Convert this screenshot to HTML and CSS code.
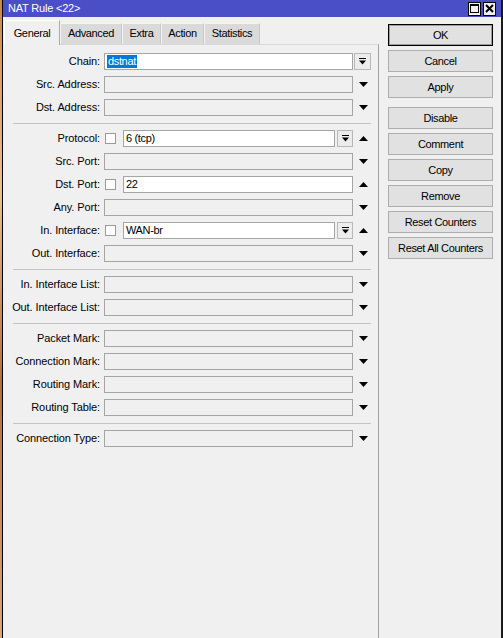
FILE: index.html
```html
<!DOCTYPE html>
<html>
<head>
<meta charset="utf-8">
<link rel="stylesheet" href="styles.css">
</head>
<body>
<div class="strip"></div>
<div class="window">
  <div class="titlebar">
    <span class="title">NAT Rule &lt;22&gt;</span>
    <div class="tb-btns">
      <span class="tb-btn"><svg width="9" height="9" viewBox="0 0 9 9"><rect x="0" y="0" width="9" height="2" fill="#000"/><rect x="0.5" y="0.5" width="8" height="8" fill="none" stroke="#000"/></svg></span>
      <span class="tb-btn"><svg width="9" height="9" viewBox="0 0 9 9"><path d="M1 1L8 8M8 1L1 8" stroke="#000" stroke-width="2"/></svg></span>
    </div>
  </div>
  <div class="body">
    <div class="main">
      <div class="tabs">
        <div class="tab active">General</div>
        <div class="tab t-adv">Advanced</div>
        <div class="tab t-extra">Extra</div>
        <div class="tab t-action">Action</div>
        <div class="tab t-stat">Statistics</div>
      </div>
      <div class="panel">
        <div class="row">
          <div class="label">Chain:</div>
          <div class="field"><div class="box white"><span class="sel">dstnat</span></div></div>
          <div class="trail"><span class="combo first"><svg width="7" height="7" viewBox="0 0 7 7"><rect x="0" y="0" width="7" height="1"/><path d="M0 2.5h7L3.5 6.5z"/></svg></span></div>
        </div>
        <div class="row">
          <div class="label">Src. Address:</div>
          <div class="field"><div class="box"></div></div>
          <div class="trail"><svg class="arr" width="9" height="5" viewBox="0 0 9 5"><path d="M0 0h9L4.5 5z"/></svg></div>
        </div>
        <div class="row">
          <div class="label">Dst. Address:</div>
          <div class="field"><div class="box"></div></div>
          <div class="trail"><svg class="arr" width="9" height="5" viewBox="0 0 9 5"><path d="M0 0h9L4.5 5z"/></svg></div>
        </div>
        <div class="sep"></div>
        <div class="row">
          <div class="label">Protocol:</div>
          <div class="field"><span class="check"></span><div class="box white">6 (tcp)</div><span class="combo"><svg width="7" height="7" viewBox="0 0 7 7"><rect x="0" y="0" width="7" height="1"/><path d="M0 2.5h7L3.5 6.5z"/></svg></span></div>
          <div class="trail"><svg class="arr" width="9" height="5" viewBox="0 0 9 5"><path d="M0 5h9L4.5 0z"/></svg></div>
        </div>
        <div class="row">
          <div class="label">Src. Port:</div>
          <div class="field"><div class="box"></div></div>
          <div class="trail"><svg class="arr" width="9" height="5" viewBox="0 0 9 5"><path d="M0 0h9L4.5 5z"/></svg></div>
        </div>
        <div class="row">
          <div class="label">Dst. Port:</div>
          <div class="field"><span class="check"></span><div class="box white">22</div></div>
          <div class="trail"><svg class="arr" width="9" height="5" viewBox="0 0 9 5"><path d="M0 5h9L4.5 0z"/></svg></div>
        </div>
        <div class="row">
          <div class="label">Any. Port:</div>
          <div class="field"><div class="box"></div></div>
          <div class="trail"><svg class="arr" width="9" height="5" viewBox="0 0 9 5"><path d="M0 0h9L4.5 5z"/></svg></div>
        </div>
        <div class="row">
          <div class="label">In. Interface:</div>
          <div class="field"><span class="check"></span><div class="box white">WAN-br</div><span class="combo"><svg width="7" height="7" viewBox="0 0 7 7"><rect x="0" y="0" width="7" height="1"/><path d="M0 2.5h7L3.5 6.5z"/></svg></span></div>
          <div class="trail"><svg class="arr" width="9" height="5" viewBox="0 0 9 5"><path d="M0 5h9L4.5 0z"/></svg></div>
        </div>
        <div class="row">
          <div class="label">Out. Interface:</div>
          <div class="field"><div class="box"></div></div>
          <div class="trail"><svg class="arr" width="9" height="5" viewBox="0 0 9 5"><path d="M0 0h9L4.5 5z"/></svg></div>
        </div>
        <div class="sep"></div>
        <div class="row">
          <div class="label">In. Interface List:</div>
          <div class="field"><div class="box"></div></div>
          <div class="trail"><svg class="arr" width="9" height="5" viewBox="0 0 9 5"><path d="M0 0h9L4.5 5z"/></svg></div>
        </div>
        <div class="row">
          <div class="label">Out. Interface List:</div>
          <div class="field"><div class="box"></div></div>
          <div class="trail"><svg class="arr" width="9" height="5" viewBox="0 0 9 5"><path d="M0 0h9L4.5 5z"/></svg></div>
        </div>
        <div class="sep"></div>
        <div class="row">
          <div class="label">Packet Mark:</div>
          <div class="field"><div class="box"></div></div>
          <div class="trail"><svg class="arr" width="9" height="5" viewBox="0 0 9 5"><path d="M0 0h9L4.5 5z"/></svg></div>
        </div>
        <div class="row">
          <div class="label">Connection Mark:</div>
          <div class="field"><div class="box"></div></div>
          <div class="trail"><svg class="arr" width="9" height="5" viewBox="0 0 9 5"><path d="M0 0h9L4.5 5z"/></svg></div>
        </div>
        <div class="row">
          <div class="label">Routing Mark:</div>
          <div class="field"><div class="box"></div></div>
          <div class="trail"><svg class="arr" width="9" height="5" viewBox="0 0 9 5"><path d="M0 0h9L4.5 5z"/></svg></div>
        </div>
        <div class="row">
          <div class="label">Routing Table:</div>
          <div class="field"><div class="box"></div></div>
          <div class="trail"><svg class="arr" width="9" height="5" viewBox="0 0 9 5"><path d="M0 0h9L4.5 5z"/></svg></div>
        </div>
        <div class="sep"></div>
        <div class="row">
          <div class="label">Connection Type:</div>
          <div class="field"><div class="box"></div></div>
          <div class="trail"><svg class="arr" width="9" height="5" viewBox="0 0 9 5"><path d="M0 0h9L4.5 5z"/></svg></div>
        </div>
      </div>
    </div>
    <div class="side">
      <div class="btn default">OK</div>
      <div class="btn">Cancel</div>
      <div class="btn">Apply</div>
      <div class="btn gap">Disable</div>
      <div class="btn">Comment</div>
      <div class="btn">Copy</div>
      <div class="btn">Remove</div>
      <div class="btn">Reset Counters</div>
      <div class="btn">Reset All Counters</div>
    </div>
  </div>
</div>
</body>
</html>
```
FILE: styles.css
```css
* { box-sizing: border-box; }
html, body { margin: 0; padding: 0; }
body {
  display: flex;
  width: 503px;
  height: 638px;
  overflow: hidden;
  background: #f0f0f0;
  font-family: "Liberation Sans", Arial, sans-serif;
  font-size: 11px;
  letter-spacing: -0.35px;
  color: #000;
}
.strip {
  width: 2px;
  height: 638px;
  background: linear-gradient(#c98a4a, #e8c090 30%, #b07040 60%, #d8a878);
  flex: none;
}
.window {
  width: 501px;
  height: 638px;
  border-left: 1px solid #000;
  border-right: 2px solid #1a1a1a;
  background: #f0f0f0;
  display: flex;
  flex-direction: column;
  flex: none;
}
.titlebar {
  height: 17px;
  background: #4a4fc8;
  display: flex;
  align-items: center;
  justify-content: space-between;
  padding: 0 5px 0 5px;
}
.title {
  color: #fff;
  font-size: 11px;
  letter-spacing: -0.2px;
  line-height: 17px;
}
.tb-btns { display: flex; gap: 2px; align-items: center; }
.tb-btn {
  width: 13px;
  height: 14px;
  background: #f0f0f0;
  border: 1px solid #000;
  display: flex;
  align-items: center;
  justify-content: center;
}
.body { display: flex; flex: 1; }
.main {
  width: 376px;
  display: flex;
  flex-direction: column;
}
.tabs {
  height: 27px;
  display: flex;
  align-items: flex-end;
  padding-left: 1px;
  position: relative;
  z-index: 1;
}
.tab {
  height: 21px;
  background: #dadada;
  border-top: 1px solid #f4f4f4;
  border-left: 1px solid #f4f4f4;
  border-right: 1px solid #c8c8c8;
  text-align: center;
  line-height: 13px;
  padding-top: 3px;
}
.tab.active {
  height: 25px;
  margin-bottom: -1px;
  background: #f0f0f0;
  width: 56px;
  border-top: 1px solid #fff;
  border-left: 1px solid #fff;
  border-right: 1px solid #a8a8a8;
  padding-top: 6px;
}
.t-adv { width: 62px; }
.t-extra { width: 39px; }
.t-action { width: 43px; }
.t-stat { width: 56px; }
.panel {
  flex: 1;
  border-top: 1px solid #d8d8d8;
  border-right: 1px solid #a0a0a0;
  padding-top: 8px;
}
.row {
  display: flex;
  height: 17px;
  margin-bottom: 6px;
  align-items: center;
}
.label {
  width: 97px;
  text-align: right;
  line-height: 17px;
  white-space: nowrap;
  letter-spacing: -0.1px;
}
.field {
  width: 249px;
  margin-left: 4px;
  height: 17px;
  display: flex;
  align-items: center;
}
.box {
  flex: 1;
  height: 17px;
  border: 1px solid #a5a5a5;
  background: #f0f0f0;
  line-height: 15px;
  padding-left: 2px;
  white-space: nowrap;
}
.box.white { background: #fff; }
.sel {
  background: #0078d7;
  color: #fff;
  display: inline-block;
  line-height: 13px;
  padding: 0 1px;
}
.check {
  width: 11px;
  height: 11px;
  margin-left: 1px;
  margin-right: 7px;
  border: 1px solid #9a9a9a;
  background: #fff;
  flex: none;
}
.combo {
  width: 16px;
  height: 17px;
  margin-left: 2px;
  border: 1px solid #b8b8b8;
  background: #ececec;
  display: flex;
  align-items: center;
  justify-content: center;
  flex: none;
}
.combo.first { width: 17px; margin-left: 1px; }
.trail {
  width: 19px;
  height: 17px;
  display: flex;
  align-items: center;
}
.arr { margin-left: 6px; }
.sep {
  height: 1px;
  background: #c4c4c4;
  margin: 7px 0 6px 10px;
  width: 358px;
}
.side {
  width: 122px;
  padding: 7px 0 0 9px;
}
.btn {
  width: 105px;
  height: 22px;
  margin-bottom: 4px;
  border: 1px solid #adadad;
  background: #e1e1e1;
  text-align: center;
  line-height: 20px;
  white-space: nowrap;
}
.btn.default {
  border: 1px solid #000;
  box-shadow: inset 0 0 0 1px rgba(0,0,0,0.3);
}
.btn.gap { margin-top: 9px; }
```
